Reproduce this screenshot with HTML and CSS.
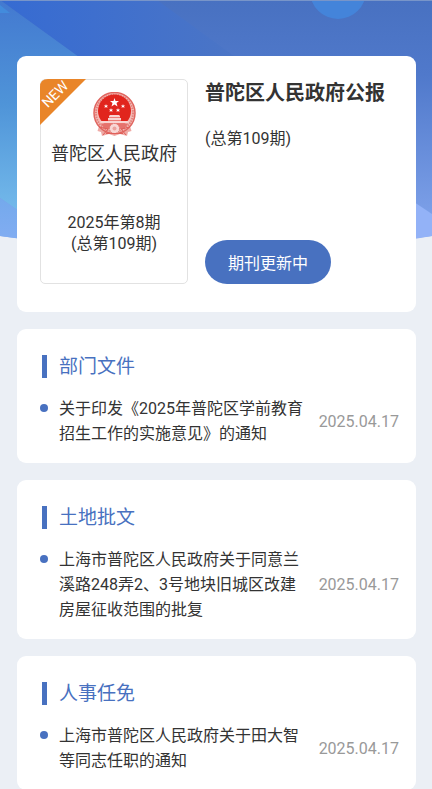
FILE: index.html
```html
<!DOCTYPE html>
<html lang="zh-CN">
<head>
<meta charset="utf-8">
<meta name="viewport" content="width=device-width, initial-scale=1">
<title>普陀区人民政府公报</title>
<link rel="stylesheet" href="styles.css">
</head>
<body>
<svg class="backdrop" viewBox="0 0 432 244" preserveAspectRatio="none" aria-hidden="true">
  <defs>
    <linearGradient id="sky" x1="0" y1="0" x2="0" y2="1"><stop offset="0" stop-color="#4871c1"/><stop offset=".3" stop-color="#5079cb"/><stop offset="1" stop-color="#87a9ef"/></linearGradient>
    <linearGradient id="beam" x1="0" y1="0" x2="1" y2="0"><stop offset="0" stop-color="#366bd2"/><stop offset=".4" stop-color="#3e6fce"/><stop offset="1" stop-color="#4b75c6"/></linearGradient>
    <linearGradient id="cyan" x1="0" y1="0" x2="0" y2="1"><stop offset="0" stop-color="#4379d0"/><stop offset=".4" stop-color="#4f94d8"/><stop offset=".8" stop-color="#72b8ea"/></linearGradient>
    <linearGradient id="low" x1="0" y1="0" x2="0" y2="1"><stop offset="0" stop-color="#74a9ec"/><stop offset="1" stop-color="#82adf2"/></linearGradient>
  </defs>
  <path fill="url(#sky)" d="M0 0H432V236Q216 266 0 236Z"/>
  <path fill="url(#beam)" d="M0 0H157L234 56V170L0 0Z"/>
  <path fill="url(#cyan)" d="M0 0L90 65V260L0 198Z"/>
  <path fill="#438bdc" d="M0 5L10 13H0Z"/>
  <path fill="url(#low)" d="M0 198L50 232V242Q20 239 0 236Z"/>
  <path fill="#93b2f7" d="M414 202L432 214V236L414 239Z"/>
  <circle cx="338" cy="-9" r="28" fill="#4484da"/>
  <path fill="#7895c9" d="M0 0H432V1H0Z"/>
</svg>
<main class="page">
  <section class="card issue">
    <div class="cover">
      <svg class="ribbon" viewBox="0 0 46 46" aria-hidden="true"><path fill="#e98529" d="M8 0H46L0 46V8Q0 0 8 0Z"/></svg>
      <span class="ribbon-text">NEW</span>
      <svg class="emblem" viewBox="0 0 90 90" role="img" aria-label="国徽">
        <path fill="#efaaa6" d="M16 62L11 78L18 80L20 88L34 84L45 88L56 84L70 88L72 80L79 78L74 62Z"/>
        <circle cx="45" cy="42" r="41" fill="#f3bdb9" stroke="#e0655f" stroke-width="3"/>
        <circle cx="45" cy="42" r="37" fill="none" stroke="#e4807a" stroke-width="4" stroke-dasharray="3 2"/>
        <circle cx="45" cy="38" r="33" fill="#e1251d"/>
        <path fill="#fff" d="M45 12L47 18H54L49 22L51 29L45 25L39 29L41 22L36 18H43Z"/>
        <g fill="#fff">
          <path d="M28 24L29 27H32L30 29L31 32L28 30L25 32L26 29L24 27H27Z"/>
          <path d="M62 24L63 27H66L64 29L65 32L62 30L59 32L60 29L58 27H61Z"/>
          <path d="M38 32L39 35H42L40 37L41 40L38 38L35 40L36 37L34 35H37Z"/>
          <path d="M52 32L53 35H56L54 37L55 40L52 38L49 40L50 37L48 35H51Z"/>
        </g>
        <path fill="#f9d5d2" d="M34 48L36 46H54L56 48V51H34ZM32 52H58V57H32ZM17 58H73V63H17Z"/>
        <path fill="#e5736d" d="M17 63H73L64 74H26Z"/>
        <circle cx="45" cy="73" r="10" fill="#f8d8d6" stroke="#e27972" stroke-width="2" stroke-dasharray="3 2"/>
        <circle cx="45" cy="73" r="4" fill="#eba39e"/>
        <path fill="none" stroke="#e0605a" stroke-width="2" d="M14 70L32 74L22 86M76 70L58 74L68 86M28 83H62"/>
      </svg>
      <p class="cover-title">普陀区人民政府公报</p>
      <p class="cover-issue">2025年第8期<br>(总第109期)</p>
    </div>
    <div class="info">
      <h1 class="info-title">普陀区人民政府公报</h1>
      <p class="info-issue">(总第109期)</p>
      <button class="update" type="button">期刊更新中</button>
    </div>
  </section>
  <section class="card group">
    <h2 class="group-title">部门文件</h2>
    <ul class="list">
      <li class="item"><a class="item-link" href="#">关于印发《2025年普陀区学前教育招生工作的实施意见》的通知</a><time class="date" datetime="2025-04-17">2025.04.17</time></li>
    </ul>
  </section>
  <section class="card group">
    <h2 class="group-title">土地批文</h2>
    <ul class="list">
      <li class="item"><a class="item-link" href="#">上海市普陀区人民政府关于同意兰溪路248弄2、3号地块旧城区改建房屋征收范围的批复</a><time class="date" datetime="2025-04-17">2025.04.17</time></li>
    </ul>
  </section>
  <section class="card group">
    <h2 class="group-title">人事任免</h2>
    <ul class="list">
      <li class="item"><a class="item-link" href="#">上海市普陀区人民政府关于田大智等同志任职的通知</a><time class="date" datetime="2025-04-17">2025.04.17</time></li>
    </ul>
  </section>
</main>
</body>
</html>
```
FILE: styles.css
```css
* { box-sizing: border-box; }
html { scrollbar-width: none; }
body {
  margin: 0;
  position: relative;
  background: #ebeff5;
  color: #333;
  font-family: Roboto, "Noto Sans CJK SC", sans-serif;
  font-size: 16px;
}
h1, h2, p, ul { margin: 0; padding: 0; }
.backdrop {
  position: absolute;
  top: 0;
  left: 0;
  width: 100%;
  height: 244px;
}
.page {
  position: relative;
  display: flex;
  flex-direction: column;
  gap: 17px;
  padding: 56px 16px 0 17px;
}
.card { background: #fff; border-radius: 9px; }
.issue {
  display: flex;
  gap: 17px;
  padding: 23px 17px 28px 23px;
}
.cover {
  position: relative;
  flex: 0 0 148px;
  min-height: 205px;
  padding: 12px 8px 28px;
  border: 1px solid #e2e2e2;
  border-radius: 5px;
  text-align: center;
}
.ribbon {
  position: absolute;
  top: -1px;
  left: -1px;
  width: 46px;
  height: 46px;
}
.ribbon-text {
  position: absolute;
  top: 6px;
  left: -4px;
  width: 36px;
  color: #fff;
  font-size: 14px;
  line-height: 16px;
  transform: rotate(-45deg);
}
.emblem {
  display: block;
  width: 45px;
  height: 45px;
  margin: 0 auto 5px;
}
.cover-title { font-size: 18px; line-height: 24px; }
.cover-issue { margin-top: 22px; line-height: 21px; }
.info {
  flex: 1;
  display: flex;
  flex-direction: column;
  align-items: flex-start;
}
.info-title { font-size: 20px; line-height: 28px; white-space: nowrap; }
.info-issue { margin-top: 20px; line-height: 24px; }
.update {
  margin-top: auto;
  height: 44px;
  padding: 0 23px;
  border: 0;
  border-radius: 22px;
  background: #4871c0;
  color: #fff;
  font: inherit;
}
.group { padding: 26px 17px 17px 25px; }
.group-title {
  padding-left: 12px;
  border-left: 5px solid #4871c0;
  color: #4871c0;
  font-size: 19px;
  font-weight: 400;
  line-height: 23px;
}
.list { margin: 18px 0 0 -2px; list-style: none; }
.item {
  display: flex;
  align-items: center;
  gap: 11px;
  line-height: 25px;
}
.item::before {
  content: "";
  flex: none;
  align-self: flex-start;
  width: 8px;
  height: 8px;
  margin-top: 8px;
  border-radius: 50%;
  background: #4871c0;
}
.item-link { flex: 1; color: inherit; text-decoration: none; }
.date { flex: none; color: #999; }
```
